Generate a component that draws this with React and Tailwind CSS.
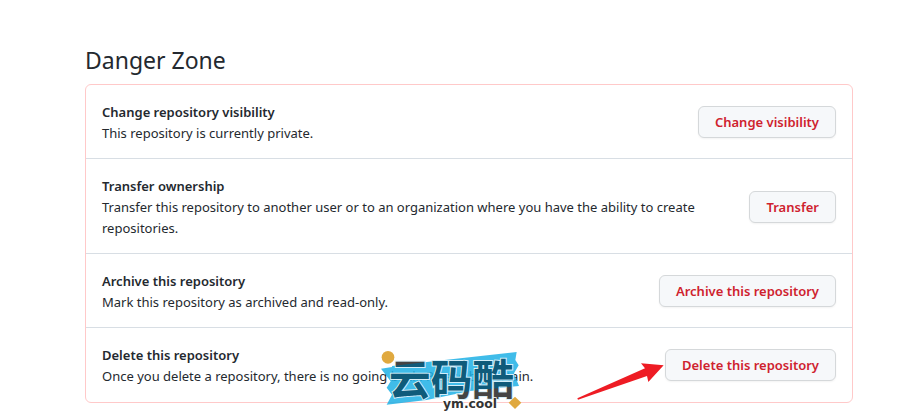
import React from 'react';

const settings = [
  {
    title: 'Change repository visibility',
    description: 'This repository is currently private.',
    action: 'Change visibility',
  },
  {
    title: 'Transfer ownership',
    description:
      'Transfer this repository to another user or to an organization where you have the ability to create repositories.',
    action: 'Transfer',
  },
  {
    title: 'Archive this repository',
    description: 'Mark this repository as archived and read-only.',
    action: 'Archive this repository',
  },
  {
    title: 'Delete this repository',
    description: 'Once you delete a repository, there is no going back. Please be certain.',
    action: 'Delete this repository',
    highlighted: true,
  },
];

const RIBBON = '33,98 66,93 66,90 190,76 440,48 436,72 446,88 432,112 447,150 300,165 170,192 50,206 66,176 50,155 62,136';

function Watermark() {
  return (
    <svg
      className="absolute left-[285px] top-[252px] w-[170px] h-[80px] pointer-events-none"
      viewBox="0 0 510 240"
    >
      <defs>
        <pattern id="ink" patternUnits="userSpaceOnUse" width="510" height="240">
          <rect width="510" height="240" fill="#444444" />
          <polygon points={RIBBON} fill="#0f5b7a" />
        </pattern>
      </defs>
      <circle cx="54" cy="64" r="19" fill="#e0a93f" />
      <polygon points={RIBBON} fill="#1fb0e5" fillOpacity="0.85" />
      <text
        x="57"
        y="178"
        fontSize="125"
        fontWeight="700"
        fontFamily="'Noto Sans CJK SC', sans-serif"
        fill="url(#ink)"
        stroke="#d5eef8"
        strokeWidth="6"
        paintOrder="stroke"
      >
        云码酷
      </text>
      <text
        x="219"
        y="217"
        fontSize="37"
        fontWeight="700"
        fontFamily="'DejaVu Sans', sans-serif"
        fill="#333333"
        stroke="#ffffff"
        strokeWidth="4"
        paintOrder="stroke"
      >
        ym.cool
      </text>
      <polygon points="435,182 454,200 435,219 416,200" fill="#e0a93f" />
    </svg>
  );
}

function Arrow() {
  return (
    <svg
      className="absolute right-full -top-1 mr-px w-[90px] h-[56px] pointer-events-none"
      viewBox="0 0 270 168"
      aria-hidden="true"
    >
      <polygon points="269,61 201,55 213,70 10,160 12,164 219,93 223,111" fill="#ee1c24" />
    </svg>
  );
}

function SettingRow({ title, description, action, highlighted }) {
  return (
    <li className="flex items-center border-t border-[#d8dee4] px-4 py-[15px] -mb-px first:border-t-0 last:mb-0">
      <div className="flex-1 pt-0.5">
        <h3 className="font-semibold">{title}</h3>
        <p>{description}</p>
      </div>
      <div className="relative ml-6 shrink-0">
        {highlighted && <Arrow />}
        <button
          type="button"
          className="rounded-md border border-[#d5d8da] bg-[#f6f8fa] px-4 py-[5px] leading-5 font-semibold text-[#cf222e] shadow-xs"
        >
          {action}
        </button>
      </div>
    </li>
  );
}

export default function App() {
  return (
    <main className="min-h-screen bg-white pt-11 pr-[49px] pl-[85px] pb-3 font-['Noto_Sans',sans-serif] text-[13px] leading-[21px] text-[#24292f]">
      <h2 className="mb-2 text-[23px] leading-8">Danger Zone</h2>
      <div className="relative">
        <ul className="rounded-md border border-[#ffc9c9]">
          {settings.map((setting) => (
            <SettingRow key={setting.title} {...setting} />
          ))}
        </ul>
        <Watermark />
      </div>
    </main>
  );
}
